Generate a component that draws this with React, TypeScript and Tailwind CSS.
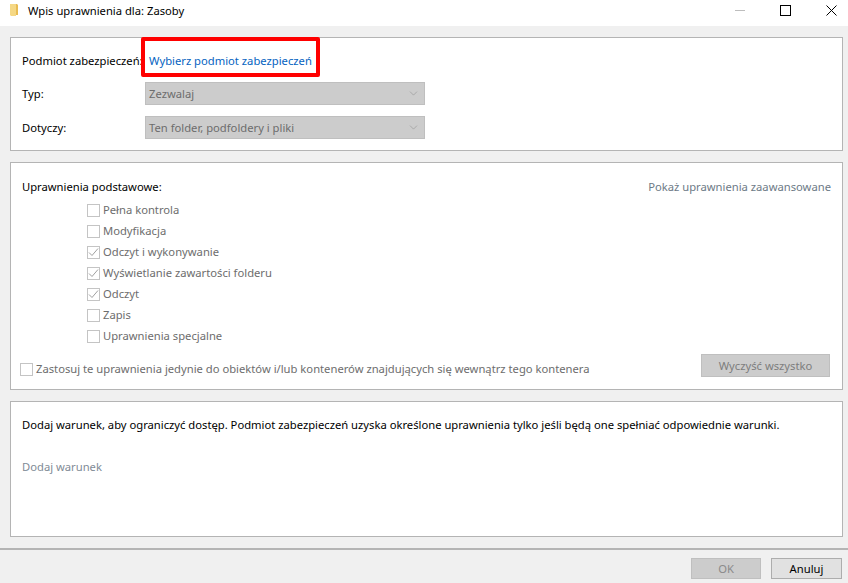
import React from 'react'
import { ChevronDown } from 'lucide-react'

const font = "font-['Noto_Sans','Open_Sans',sans-serif]"

const permissions = [
  { label: 'Pełna kontrola', checked: false },
  { label: 'Modyfikacja', checked: false },
  { label: 'Odczyt i wykonywanie', checked: true },
  { label: 'Wyświetlanie zawartości folderu', checked: true },
  { label: 'Odczyt', checked: true },
  { label: 'Zapis', checked: false },
  { label: 'Uprawnienia specjalne', checked: false },
]

const Box: React.FC<{ checked?: boolean }> = ({ checked }) => (
  <span className="w-[13px] h-[13px] border border-[#c4c4c4] bg-white flex items-center justify-center shrink-0">
    {checked && (
      <svg width="11" height="11" viewBox="0 0 11 11" fill="none" stroke="#a0a0a0" strokeWidth="1">
        <path d="M1 5.5l3 3L10 1.5" />
      </svg>
    )}
  </span>
)

const Select: React.FC<{ value: string }> = ({ value }) => (
  <div className="w-[280px] h-[23px] bg-[#cccccc] border border-[#bfbfbf] flex items-center justify-between pl-[3px] pr-[4px] text-[#6d6d6d]">
    <span>{value}</span>
    <ChevronDown size={13} strokeWidth={1} className="text-[#8c8c8c]" />
  </div>
)

export default function App() {
  return (
    <div className={`${font} relative w-[848px] h-[583px] overflow-hidden bg-[#f0f0f0] text-[11.23px] leading-[16px] text-black flex flex-col`}>
      {/* title bar */}
      <div className="h-[26px] bg-white flex items-center shrink-0 pb-[4px]">
        <svg width="9" height="12" viewBox="0 0 9 12" className="ml-[10px] mr-[9px] mt-[-2px]">
          <path d="M0 0h5l1 1v11H1l-1-1z" fill="#f5d885" />
          <path d="M5 0h2l1 1v10H6V1z" fill="#e8bb52" />
        </svg>
        <span>Wpis uprawnienia dla: Zasoby</span>
        <div className="ml-auto flex items-center mt-[-2px]">
          <span className="w-[10px] h-px bg-[#bdbdbd] mr-[35px]" />
          <span className="w-[11px] h-[11px] border border-black mr-[35px]" />
          <svg width="11" height="11" viewBox="0 0 11 11" stroke="#000" strokeWidth="1" className="mr-[11px]">
            <path d="M0.5 0.5l10 10M10.5 0.5l-10 10" />
          </svg>
        </div>
      </div>

      <div className="flex-1 flex flex-col gap-[11px] pt-[11px] pl-[10px] pr-[5px]">
        <section className="h-[114px] shrink-0 bg-white border border-[#b4b4b4] pl-[11px] pt-[15px]">
          <div className="flex items-center h-[16px]">
            <span className="w-[123px] whitespace-nowrap">Podmiot zabezpieczeń:</span>
            <a className="ml-[4px] text-[#0563c1]">Wybierz podmiot zabezpieczeń</a>
          </div>
          <div className="flex items-center h-[23px] mt-[13px]">
            <span className="w-[123px]">Typ:</span>
            <Select value="Zezwalaj" />
          </div>
          <div className="flex items-center h-[23px] mt-[11px]">
            <span className="w-[123px]">Dotyczy:</span>
            <Select value="Ten folder, podfoldery i pliki" />
          </div>
        </section>

        <section className="h-[228px] shrink-0 bg-white border border-[#b4b4b4] pl-[11px] pr-[11px] pt-[16px] flex flex-col">
          <div className="flex justify-between h-[16px]">
            <span>Uprawnienia podstawowe:</span>
            <span className="text-[#6d7a86]">Pokaż uprawnienia zaawansowane</span>
          </div>
          <div className="mt-[7px] ml-[65px] flex flex-col gap-[5px] text-[#6d6d6d]">
            {permissions.map(p => (
              <label key={p.label} className="flex items-center gap-[3px] h-[16px]">
                <Box checked={p.checked} />
                <span>{p.label}</span>
              </label>
            ))}
          </div>
          <div className="mt-[10px] flex items-end justify-between">
            <label className="flex items-center gap-[3px] -ml-[2px] h-[16px] text-[#6d6d6d]">
              <Box />
              <span>Zastosuj te uprawnienia jedynie do obiektów i/lub kontenerów znajdujących się wewnątrz tego kontenera</span>
            </label>
            <button className="w-[129px] h-[23px] mr-px bg-[#cccccc] border border-[#bfbfbf] text-[#7d7d7d]">Wyczyść wszystko</button>
          </div>
        </section>

        <section className="h-[136px] shrink-0 bg-white border border-[#b4b4b4] pl-[11px] pt-[15px]">
          <p>Dodaj warunek, aby ograniczyć dostęp. Podmiot zabezpieczeń uzyska określone uprawnienia tylko jeśli będą one spełniać odpowiednie warunki.</p>
          <p className="mt-[26px] text-[#7f8b96]">Dodaj warunek</p>
        </section>
      </div>

      {/* footer */}
      <div className="h-[35px] shrink-0 border-t-2 border-[#b4b4b4] flex items-start justify-end gap-[10px] pt-[8px] pr-[6px]">
        <button className="w-[70px] h-[21px] bg-[#cccccc] border border-[#bfbfbf] text-[#8a8a8a]">OK</button>
        <button className="w-[71px] h-[21px] bg-[#e1e1e1] border border-[#adadad]">Anuluj</button>
      </div>

      {/* red annotation */}
      <div className="absolute left-[141px] top-[37px] w-[179px] h-[40px] border-[4px] border-[#ff0000] rounded-[2px]" />
    </div>
  )
}
